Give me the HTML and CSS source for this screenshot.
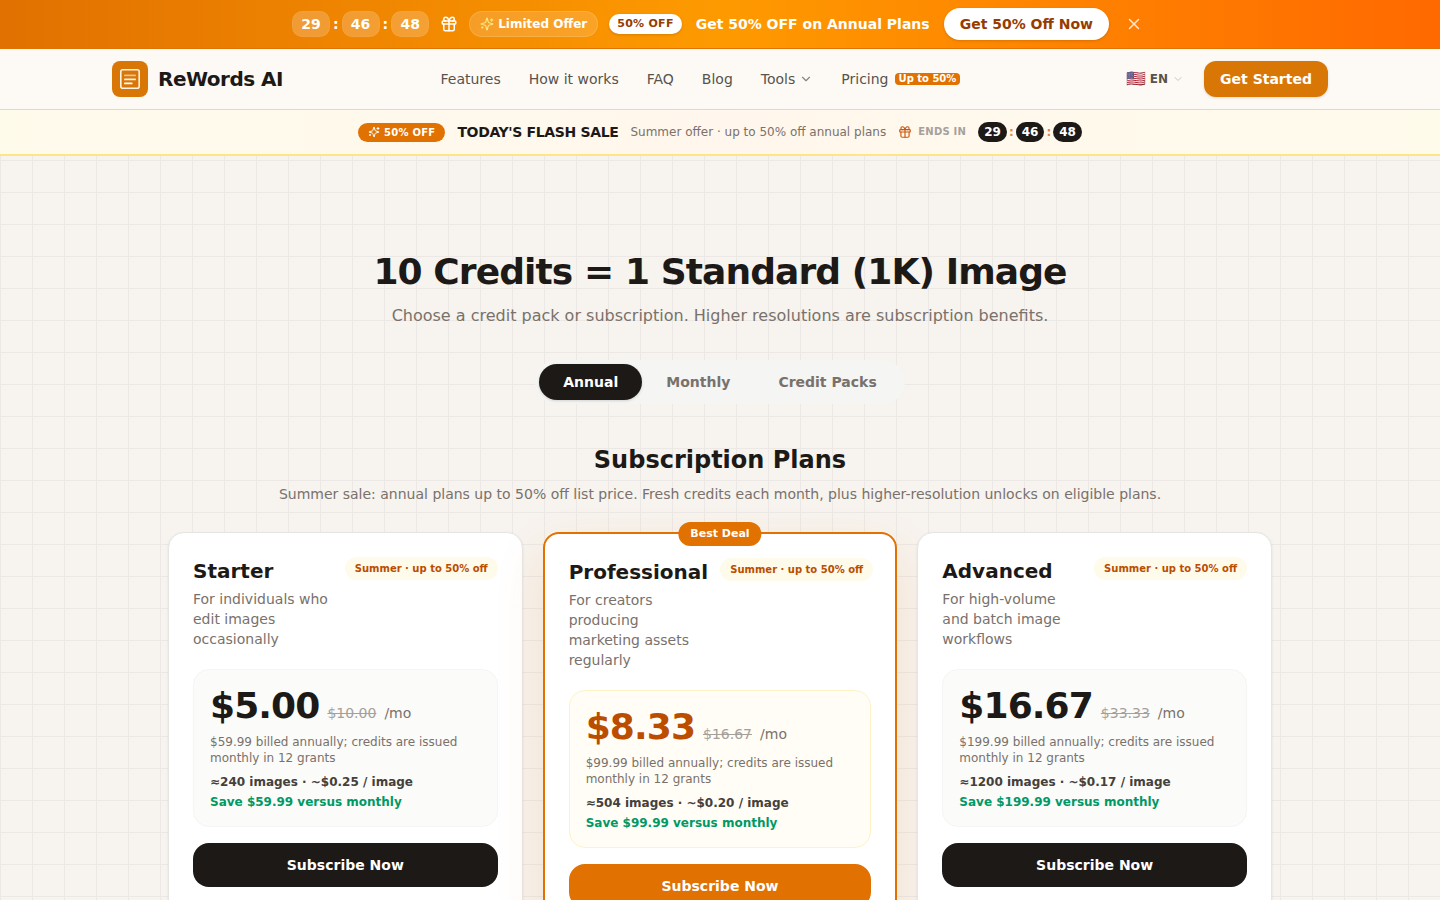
FILE: index.html
```html
<!DOCTYPE html>
<html lang="en">
  <head>
    <meta charset="UTF-8" />
    <meta name="viewport" content="width=device-width, initial-scale=1.0" />
    <title>Pricing - ReWords AI</title>
    <link rel="stylesheet" href="styles.css">
  </head>
  <body>
    <!-- shared icons -->
    <svg class="sprite" aria-hidden="true">
      <symbol id="gift" viewBox="0 0 24 24">
        <rect x="3" y="8" width="18" height="4" rx="1" />
        <path d="M12 8v13" />
        <path d="M19 12v7a2 2 0 0 1-2 2H7a2 2 0 0 1-2-2v-7" />
        <path d="M7.5 8a2.5 2.5 0 0 1 0-5A4.8 8 0 0 1 12 8a4.8 8 0 0 1 4.5-5 2.5 2.5 0 0 1 0 5" />
      </symbol>
      <symbol id="sparkles" viewBox="0 0 24 24">
        <path d="M9.937 15.5A2 2 0 0 0 8.5 14.063l-6.135-1.582a.5.5 0 0 1 0-.962L8.5 9.936A2 2 0 0 0 9.937 8.5l1.582-6.135a.5.5 0 0 1 .963 0L14.063 8.5A2 2 0 0 0 15.5 9.937l6.135 1.581a.5.5 0 0 1 0 .964L15.5 14.063a2 2 0 0 0-1.437 1.437l-1.582 6.135a.5.5 0 0 1-.963 0z" />
        <path d="M20 3v4" />
        <path d="M22 5h-4" />
        <path d="M4 17v2" />
        <path d="M5 18H3" />
      </symbol>
      <symbol id="chevron" viewBox="0 0 24 24">
        <path d="m6 9 6 6 6-6" />
      </symbol>
      <symbol id="close" viewBox="0 0 24 24">
        <path d="M18 6 6 18" />
        <path d="m6 6 12 12" />
      </symbol>
    </svg>

    <div class="promo">
      <div class="promo-info">
        <div class="timer">
          <span class="time">29</span><span class="colon">:</span>
          <span class="time">46</span><span class="colon">:</span>
          <span class="time">48</span>
        </div>
        <svg class="icon icon-md"><use href="#gift" /></svg>
        <span class="promo-tag">
          <svg class="icon icon-sm"><use href="#sparkles" /></svg>
          Limited Offer
        </span>
        <span class="promo-off">50% OFF</span>
      </div>
      <p class="promo-text">Get 50% OFF on Annual Plans</p>
      <div class="promo-actions">
        <a class="promo-cta" href="#plans">Get 50% Off Now</a>
        <button class="promo-close" type="button" aria-label="Close">
          <svg class="icon icon-md"><use href="#close" /></svg>
        </button>
      </div>
    </div>

    <header class="header">
      <div class="header-inner">
        <a class="brand" href="#">
          <svg class="logo" viewBox="0 0 36 36" aria-hidden="true">
            <rect width="36" height="36" rx="8" fill="#d97706" />
            <g fill="none" stroke="#fff">
              <rect x="8.8" y="8.8" width="18.4" height="18.4" rx="2" stroke-width="1.6" opacity=".9" />
              <g stroke-width="1.8" stroke-linecap="round">
                <path d="M12.9 14.4h10.200" opacity=".55" />
                <path d="M12.9 18.4h10.200" opacity=".9" />
                <path d="M12.9 22.4h6.800" />
              </g>
            </g>
          </svg>
          ReWords AI
        </a>
        <nav class="nav">
          <a href="#features">Features</a>
          <a href="#how">How it works</a>
          <a href="#faq">FAQ</a>
          <a href="#blog">Blog</a>
          <button class="nav-tools" type="button">
            Tools
            <svg class="icon icon-sm"><use href="#chevron" /></svg>
          </button>
          <a class="nav-pricing" href="#plans">Pricing <span>Up to 50%</span></a>
        </nav>
        <div class="header-actions">
          <button class="lang" type="button">
            <span class="flag">🇺🇸</span>
            EN
            <svg class="icon icon-xs"><use href="#chevron" /></svg>
          </button>
          <a class="get-started" href="#start">Get Started</a>
        </div>
      </div>
    </header>

    <div class="flash">
      <span class="flash-tag">
        <svg class="icon icon-xs"><use href="#sparkles" /></svg>
        50% OFF
      </span>
      <strong class="flash-title">TODAY'S FLASH SALE</strong>
      <span class="flash-text">Summer offer · up to 50% off annual plans</span>
      <span class="flash-ends">
        <svg class="icon icon-sm"><use href="#gift" /></svg>
        ENDS IN
      </span>
      <div class="flash-timer">
        <span class="time">29</span><span class="colon">:</span>
        <span class="time">46</span><span class="colon">:</span>
        <span class="time">48</span>
      </div>
    </div>

    <main class="main">
      <h1>10 Credits = 1 Standard (1K) Image</h1>
      <p class="lead">Choose a credit pack or subscription. Higher resolutions are subscription benefits.</p>

      <div class="tabs">
        <button class="tab active" type="button">Annual</button>
        <button class="tab" type="button">Monthly</button>
        <button class="tab" type="button">Credit Packs</button>
      </div>

      <section class="plans" id="plans">
        <h2>Subscription Plans</h2>
        <p class="plans-text">Summer sale: annual plans up to 50% off list price. Fresh credits each month, plus higher-resolution unlocks on eligible plans.</p>

        <div class="cards">
          <article class="card">
            <div class="card-head">
              <div>
                <h3>Starter</h3>
                <p>For individuals who edit images occasionally</p>
              </div>
              <span class="sale">Summer · up to 50% off</span>
            </div>
            <div class="price-box">
              <div class="price">
                <strong>$5.00</strong>
                <s>$10.00</s>
                <span>/mo</span>
              </div>
              <p class="billed">$59.99 billed annually; credits are issued monthly in 12 grants</p>
              <p class="images">≈240 images · ~$0.25 / image</p>
              <p class="save">Save $59.99 versus monthly</p>
            </div>
            <button class="subscribe" type="button">Subscribe Now</button>
          </article>

          <article class="card best">
            <span class="best-tag">Best Deal</span>
            <div class="card-head">
              <div>
                <h3>Professional</h3>
                <p>For creators producing marketing assets regularly</p>
              </div>
              <span class="sale">Summer · up to 50% off</span>
            </div>
            <div class="price-box">
              <div class="price">
                <strong>$8.33</strong>
                <s>$16.67</s>
                <span>/mo</span>
              </div>
              <p class="billed">$99.99 billed annually; credits are issued monthly in 12 grants</p>
              <p class="images">≈504 images · ~$0.20 / image</p>
              <p class="save">Save $99.99 versus monthly</p>
            </div>
            <button class="subscribe" type="button">Subscribe Now</button>
          </article>

          <article class="card">
            <div class="card-head">
              <div>
                <h3>Advanced</h3>
                <p>For high-volume and batch image workflows</p>
              </div>
              <span class="sale">Summer · up to 50% off</span>
            </div>
            <div class="price-box">
              <div class="price">
                <strong>$16.67</strong>
                <s>$33.33</s>
                <span>/mo</span>
              </div>
              <p class="billed">$199.99 billed annually; credits are issued monthly in 12 grants</p>
              <p class="images">≈1200 images · ~$0.17 / image</p>
              <p class="save">Save $199.99 versus monthly</p>
            </div>
            <button class="subscribe" type="button">Subscribe Now</button>
          </article>
        </div>
      </section>
    </main>
  </body>
</html>
```
FILE: styles.css
```css
* {
  box-sizing: border-box;
}

body {
  margin: 0;
  font-family: "DejaVu Sans", sans-serif;
  font-size: 14px;
  line-height: 20px;
  color: #1c1917;
  background-color: #f7f3ee;
  background-image: linear-gradient(to right, #ebe8e5 1px, transparent 1px),
    linear-gradient(to bottom, #ebe8e5 1px, transparent 1px);
  background-size: 32px 32px;
}

h1,
h2,
h3,
p {
  margin: 0;
}

a {
  color: inherit;
  text-decoration: none;
}

button {
  margin: 0;
  padding: 0;
  border: none;
  background: none;
  font: inherit;
  color: inherit;
  cursor: pointer;
}

/* icons */
.sprite {
  display: none;
}

.icon {
  flex-shrink: 0;
  fill: none;
  stroke: currentColor;
  stroke-width: 2;
  stroke-linecap: round;
  stroke-linejoin: round;
}

.icon-xs {
  width: 12px;
  height: 12px;
}

.icon-sm {
  width: 14px;
  height: 14px;
}

.icon-md {
  width: 18px;
  height: 18px;
}

/* promo bar */
.promo {
  display: flex;
  align-items: center;
  justify-content: center;
  gap: 14px;
  padding: 8px 16px;
  border-bottom: 1px solid #e17100;
  background: linear-gradient(to right, #e17100, #fe9a00, #ff6900);
  color: #fff;
  font-weight: bold;
}

.promo-info,
.promo-actions {
  display: flex;
  align-items: center;
  gap: 11px;
}

.timer {
  display: flex;
  align-items: center;
  gap: 3px;
}

.timer .time {
  min-width: 38px;
  padding: 2px 8px;
  border: 1px solid rgba(255, 255, 255, 0.05);
  border-radius: 10px;
  background: rgba(255, 255, 255, 0.2);
  text-align: center;
}

.promo-tag {
  display: flex;
  align-items: center;
  gap: 4px;
  padding: 4px 10px;
  border: 1px solid rgba(255, 255, 255, 0.15);
  border-radius: 13px;
  background: rgba(255, 255, 255, 0.15);
  font-size: 12px;
  line-height: 16px;
}

.promo-tag .icon {
  color: #fee685;
}

.promo-off {
  padding: 2px 8px;
  border-radius: 10px;
  background: #fff;
  box-shadow: 0 1px 3px rgba(0, 0, 0, 0.15);
  color: #973c00;
  font-size: 11px;
  line-height: 16px;
  letter-spacing: 0.025em;
}

.promo-cta {
  padding: 6px 16px;
  border-radius: 16px;
  background: #fff;
  box-shadow: 0 1px 3px rgba(0, 0, 0, 0.15);
  color: #973c00;
}

.promo-close {
  display: flex;
  padding: 5px;
  opacity: 0.8;
}

/* header */
.header {
  border-bottom: 1px solid #e7d5c8;
  background: #fdfaf6;
}

.header-inner {
  display: flex;
  align-items: center;
  justify-content: space-between;
  max-width: 1280px;
  margin: 0 auto;
  padding: 12px 32px;
}

.brand {
  display: flex;
  align-items: center;
  gap: 10px;
  font-size: 20px;
  font-weight: bold;
  letter-spacing: -0.025em;
}

.logo {
  width: 36px;
  height: 36px;
}

.nav {
  display: flex;
  align-items: center;
  gap: 28px;
  color: #57534d;
}

.nav-tools,
.nav-pricing {
  display: flex;
  align-items: center;
  gap: 4px;
}

.nav-tools .icon {
  opacity: 0.7;
}

.nav-pricing {
  gap: 6px;
}

.nav-pricing span {
  padding: 0 4px;
  border-radius: 4px;
  background: #e17100;
  color: #fff;
  font-size: 10px;
  font-weight: bold;
  line-height: 12px;
}

.header-actions {
  display: flex;
  align-items: center;
  gap: 12px;
}

.lang {
  display: flex;
  align-items: center;
  gap: 4px;
  padding: 0 8px;
  color: #57534d;
  font-size: 12px;
  font-weight: bold;
}

.flag {
  font-size: 16px;
}

.lang .icon {
  color: #c9c5c1;
}

.get-started {
  padding: 8px 16px;
  border-radius: 12px;
  background: #d97706;
  box-shadow: 0 1px 3px rgba(0, 0, 0, 0.12);
  color: #fff;
  font-weight: bold;
}

/* flash sale bar */
.flash {
  display: flex;
  align-items: center;
  justify-content: center;
  gap: 12px;
  padding: 12px 16px;
  border-bottom: 2px solid #fee685;
  background: linear-gradient(to right, #fffbeb, #fff7ed, #fffbeb);
}

.flash-tag {
  display: flex;
  align-items: center;
  gap: 4px;
  padding: 2px 10px;
  border-radius: 10px;
  background: #e17100;
  color: #fff;
  font-size: 10px;
  font-weight: bold;
  line-height: 15px;
  letter-spacing: 0.025em;
}

.flash-title {
  letter-spacing: -0.025em;
}

.flash-text {
  color: #79716b;
  font-size: 12px;
}

.flash-ends {
  display: flex;
  align-items: center;
  gap: 6px;
  color: #a6a09b;
  font-size: 10px;
  font-weight: bold;
  letter-spacing: 0.025em;
}

.flash-ends .icon {
  color: #ca5a10;
}

.flash-timer {
  display: flex;
  align-items: center;
  gap: 2px;
  font-size: 12px;
  font-weight: bold;
}

.flash-timer .time {
  padding: 0 6px;
  border-radius: 10px;
  background: #1c1917;
  color: #fff;
}

.flash-timer .colon {
  color: #e08a45;
}

/* pricing */
.main {
  display: flex;
  flex-direction: column;
  align-items: center;
  max-width: 1152px;
  margin: 0 auto;
  padding: 96px 24px 64px;
  text-align: center;
}

h1 {
  font-size: 36px;
  line-height: 40px;
  letter-spacing: -0.025em;
}

.lead {
  margin-top: 12px;
  color: #79716b;
  font-size: 16px;
  line-height: 24px;
}

.tabs {
  display: flex;
  margin-top: 32px;
  padding: 4px;
  border-radius: 22px;
  background: #f5f5f4;
}

.tab {
  padding: 8px 24px;
  border-radius: 18px;
  color: #79716b;
  font-weight: bold;
}

.tab.active {
  background: #1c1917;
  box-shadow: 0 1px 3px rgba(0, 0, 0, 0.15);
  color: #fff;
}

.plans {
  width: 100%;
  margin-top: 40px;
}

h2 {
  font-size: 24px;
  line-height: 32px;
}

.plans-text {
  margin-top: 8px;
  color: #79716b;
}

.cards {
  display: grid;
  grid-template-columns: repeat(3, 1fr);
  gap: 20px;
  margin-top: 28px;
  text-align: left;
}

.card {
  position: relative;
  padding: 24px 24px 40px;
  border: 1px solid #e7e5e4;
  border-radius: 16px;
  background: #fff;
  box-shadow: 0 1px 3px rgba(0, 0, 0, 0.08);
}

.card.best {
  border: 2px solid #e17100;
  box-shadow: 0 20px 50px rgba(225, 113, 0, 0.14);
}

.best-tag {
  position: absolute;
  top: -12px;
  left: 50%;
  transform: translateX(-50%);
  padding: 4px 12px;
  border-radius: 13px;
  background: #e17100;
  color: #fff;
  font-size: 11px;
  font-weight: bold;
  line-height: 16px;
}

.card-head {
  display: flex;
  align-items: flex-start;
  justify-content: space-between;
  gap: 12px;
}

h3 {
  font-size: 20px;
  line-height: 28px;
}

.card-head p {
  margin-top: 4px;
  color: #79716b;
}

.sale {
  flex-shrink: 0;
  padding: 4px 10px;
  border-radius: 12px;
  background: #fffbeb;
  color: #bb4d00;
  font-size: 10px;
  font-weight: bold;
  line-height: 15px;
}

.price-box {
  margin-top: 20px;
  padding: 16px;
  border: 1px solid #f5f5f4;
  border-radius: 16px;
  background: #fbfbf9;
  font-size: 12px;
  line-height: 16px;
}

.best .price-box {
  border-color: #fef3c6;
  background: #fffdf5;
}

.price {
  display: flex;
  align-items: baseline;
  gap: 8px;
  color: #79716b;
  font-size: 14px;
  line-height: 20px;
}

.price strong {
  color: #1c1917;
  font-size: 36px;
  line-height: 40px;
  letter-spacing: -0.025em;
}

.best .price strong {
  color: #bb4d00;
}

.price s {
  color: #a6a09b;
}

.billed {
  margin-top: 8px;
  color: #79716b;
}

.images {
  margin-top: 8px;
  color: #44403b;
  font-weight: bold;
}

.save {
  margin-top: 4px;
  color: #009966;
  font-weight: bold;
}

.subscribe {
  width: 100%;
  margin-top: 16px;
  padding: 12px;
  border-radius: 16px;
  background: #1c1917;
  color: #fff;
  font-weight: bold;
}

.best .subscribe {
  background: #e17100;
}
```
